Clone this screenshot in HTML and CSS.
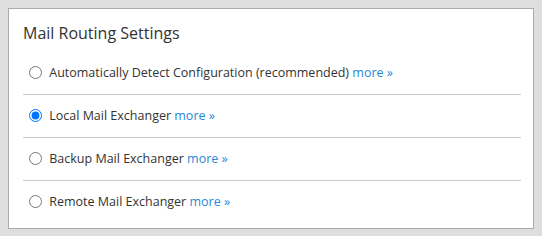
FILE: index.html
```html
<!DOCTYPE html>
<html lang="en">
<head>
    <meta charset="UTF-8">
    <title>Mail Routing Settings</title>
    <link rel="stylesheet" href="styles.css">
</head>
<body>

<div class="panel">
    <h3>Mail Routing Settings</h3>

    <!-- routing options -->
    <div class="option">
        <label><input type="radio" name="routing" value="auto"> Automatically Detect Configuration (recommended)</label>
        <a href="#">more &raquo;</a>
    </div>
    <div class="option">
        <label><input type="radio" name="routing" value="local" checked> Local Mail Exchanger</label>
        <a href="#">more &raquo;</a>
    </div>
    <div class="option">
        <label><input type="radio" name="routing" value="backup"> Backup Mail Exchanger</label>
        <a href="#">more &raquo;</a>
    </div>
    <div class="option">
        <label><input type="radio" name="routing" value="remote"> Remote Mail Exchanger</label>
        <a href="#">more &raquo;</a>
    </div>
</div>

</body>
</html>
```

FILE: styles.css
```css
body {
    font-family: "Open Sans", Arial, sans-serif;
    margin: 8px;
    background-color: #dedede;
    color: #333;
}
.panel {
    background-color: white;
    border: 1px solid #aaa;
    padding: 13px 12px 5px 14px;
}
h3 {
    margin: 0 0 8px;
    font-size: 16px;
    font-weight: normal;
    line-height: 22px;
    color: #333;
}
.option {
    font-size: 12.5px;
    line-height: 18px;
    padding: 12px 0 12px;
    border-bottom: 1px solid #ccc;
}
.option:last-child {
    border-bottom: none;
}
.option input {
    margin: 0 4px 0 6px;
    vertical-align: -2px;
}
.option a {
    color: #2a88d8;
    text-decoration: none;
}
```
